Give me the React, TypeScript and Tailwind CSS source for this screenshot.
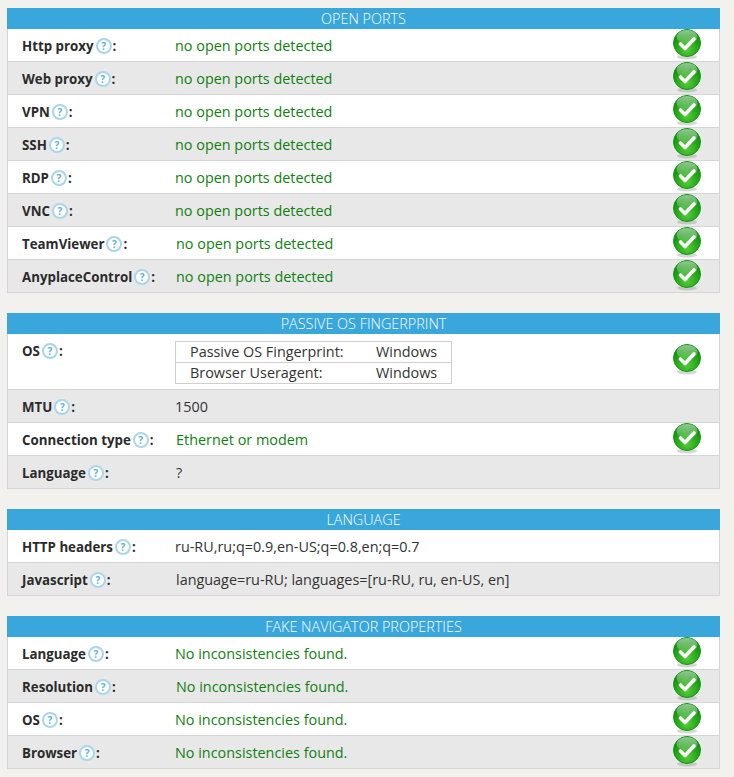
const Check = () => (
    <svg width="30" height="32" viewBox="0 0 30 32" className="block">
        <defs>
            <radialGradient id="ball" cx="50%" cy="75%" r="70%">
                <stop offset="0%" stopColor="#55cc3a" />
                <stop offset="60%" stopColor="#22a516" />
                <stop offset="100%" stopColor="#0b860d" />
            </radialGradient>
            <linearGradient id="shine" x1="0" y1="0" x2="0" y2="1">
                <stop offset="0%" stopColor="#ffffff" stopOpacity="0.55" />
                <stop offset="100%" stopColor="#ffffff" stopOpacity="0.12" />
            </linearGradient>
        </defs>
        <ellipse cx="15" cy="29" rx="10" ry="2.5" fill="#8a8a8a" opacity="0.35" />
        <circle cx="15" cy="15" r="13.5" fill="url(#ball)" stroke="#159a18" strokeWidth="1" />
        <ellipse cx="15" cy="9" rx="10.5" ry="7" fill="url(#shine)" />
        <path d="M8.5 16 L13 20.5 L22 11" fill="none" stroke="#ffffff" strokeWidth="3.6" strokeLinecap="round" strokeLinejoin="round" />
    </svg>
);

const Help = () => (
    <span className="inline-flex items-center justify-center w-[16px] h-[16px] ml-[2px] mr-[1px] -mt-[2px] rounded-full border-2 border-[#a9d6ea] text-[10px] font-bold leading-none text-[#5fb2d8] bg-white">
        ?
    </span>
);

type RowProps = {
    label: string;
    value: string;
    green?: boolean;
    check?: boolean;
    gray?: boolean;
    last?: boolean;
    col?: string;
};

const Row = ({ label, value, green, check, gray, last, col = "w-[153px]" }: RowProps) => (
    <div className={`flex items-center pt-[2px] pl-[14px] ${gray ? "bg-[#e9e8e9]" : "bg-white"} ${last ? "h-[32px]" : "h-[33px] border-b border-[#d5d5d5]"}`}>
        <div className={`${col} shrink-0 flex items-center pt-[2px] font-bold text-[13.3px] text-[#2b2b2b]`}>
            {label}<Help />:
        </div>
        <div className={`flex-1 ${green ? "text-[#0f7f0f]" : "text-[#333333]"}`}>{value}</div>
        {check && <div className="w-[33px] mr-[16px] -mt-[5px] flex justify-center"><Check /></div>}
    </div>
);

const Panel = ({ title, children }: { title: string; children: React.ReactNode }) => (
    <section className="border border-[#d5d5d5] border-t-0 mb-[20px]">
        <div className="h-[21px] -mx-px bg-[#39a7dc] text-white text-center text-[14.4px] font-light leading-[21px]">{title}</div>
        {children}
    </section>
);

const ports = ["Http proxy", "Web proxy", "VPN", "SSH", "RDP", "VNC", "TeamViewer", "AnyplaceControl"];
const fake = ["Language", "Resolution", "OS", "Browser"];

const App = () => {
    return (
        <main className="min-h-[777px] bg-[#f2f1ed] pt-2 pl-[7px] pr-[14px] text-[14.4px] font-['Open_Sans',sans-serif]">
            <Panel title="OPEN PORTS">
                {ports.map((p, i) => (
                    <Row key={p} label={p} value="no open ports detected" green check gray={i % 2 === 1} last={i === ports.length - 1} col={i > 5 ? "w-[154px]" : "w-[153px]"} />
                ))}
            </Panel>

            <Panel title="PASSIVE OS FINGERPRINT">
                <div className="flex items-start h-[56px] pl-[14px] pt-[7px] bg-white border-b border-[#d5d5d5]">
                    <div className="w-[153px] shrink-0 flex items-center h-[21px] font-bold text-[13.3px] text-[#2b2b2b]">OS<Help />:</div>
                    <div className="flex-1">
                        <div className="w-[277px] border border-[#cfcfcf] text-[#333333]">
                            <div className="flex h-[21px] items-center pl-[14px] border-b border-[#cfcfcf]">
                                <span className="w-[186px]">Passive OS Fingerprint:</span>
                                <span>Windows</span>
                            </div>
                            <div className="flex h-[20px] items-center pl-[14px]">
                                <span className="w-[186px]">Browser Useragent:</span>
                                <span>Windows</span>
                            </div>
                        </div>
                    </div>
                    <div className="w-[33px] mr-[16px] mt-[2px] flex justify-center"><Check /></div>
                </div>
                <Row label="MTU" value="1500" gray />
                <Row label="Connection type" value="Ethernet or modem" green check col="w-[154px]" />
                <Row label="Language" value="?" gray last col="w-[154px]" />
            </Panel>

            <Panel title="LANGUAGE">
                <Row label="HTTP headers" value="ru-RU,ru;q=0.9,en-US;q=0.8,en;q=0.7" />
                <Row label="Javascript" value="language=ru-RU; languages=[ru-RU, ru, en-US, en]" gray last col="w-[154px]" />
            </Panel>

            <Panel title="FAKE NAVIGATOR PROPERTIES">
                {fake.map((f, i) => (
                    <Row key={f} label={f} value="No inconsistencies found." green check gray={i % 2 === 1} last={i === fake.length - 1} col={i === 1 ? "w-[154px]" : "w-[153px]"} />
                ))}
            </Panel>
        </main>
    );
};

export default App;
